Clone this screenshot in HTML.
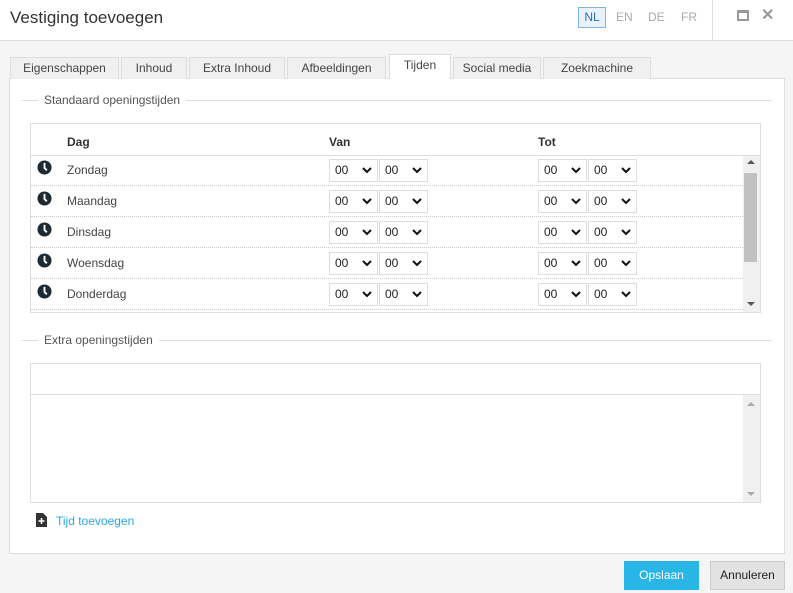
<!DOCTYPE html><html><head><style>
*{box-sizing:border-box;margin:0;padding:0}
body{width:793px;height:593px;background:#f5f5f5;font-family:"Liberation Sans",sans-serif;font-size:12px;color:#333;position:relative;overflow:hidden}
.a{position:absolute}
.hdr{left:0;top:0;width:793px;height:41px;background:#fff;border-bottom:1px solid #ddd}
.tab{position:absolute;top:57px;height:22px;border:1px solid #ddd;border-bottom:none;background:#f0f0f0;text-align:center;line-height:21px;font-size:12px;color:#444}
.panel{left:9px;top:78px;width:776px;height:476px;background:#fff;border:1px solid #ddd}
.leg{font-size:12px;color:#555;background:#fff;padding:0 6px}
.line{height:1px;background:#ddd}
.sel{position:absolute;width:49px;height:23px;border:1px solid #ddd;background:#fff;font-size:12px;line-height:21px;padding-left:5px;color:#222}
.sel svg{position:absolute;right:5px;top:7px}
.row{position:absolute;left:31px;width:712px;height:31px;border-bottom:1px dotted #ccc}
.clk{position:absolute;left:6px;top:5px}
.day{position:absolute;left:36px;top:8px;font-size:12px;color:#444}
</style></head><body>
<div class="a hdr"></div>
<div class="a" style="left:10px;top:8px;font-size:17px;color:#333">Vestiging toevoegen</div>
<div class="a" style="left:578px;top:7px;width:28px;height:21px;border:1px solid #7fb3e8;background:#e8f2fc;color:#2a6fc0;text-align:center;line-height:19px;font-size:12px">NL</div>
<div class="a" style="left:616px;top:10px;color:#aaa">EN</div>
<div class="a" style="left:648px;top:10px;color:#aaa">DE</div>
<div class="a" style="left:681px;top:10px;color:#aaa">FR</div>
<div class="a" style="left:712px;top:0;width:1px;height:40px;background:#ddd"></div>
<div class="a" style="left:737px;top:10px;width:12px;height:11px;border:2px solid #999;border-top-width:3px"></div>
<div class="a" style="left:761px;top:5px;font-size:16px;color:#999;font-weight:bold">✕</div>

<div class="a panel"></div>
<div class="tab" style="left:10px;width:109px">Eigenschappen</div>
<div class="tab" style="left:121px;width:66px">Inhoud</div>
<div class="tab" style="left:189px;width:96px">Extra Inhoud</div>
<div class="tab" style="left:287px;width:99px">Afbeeldingen</div>
<div class="tab" style="left:389px;top:54px;height:25px;width:62px;background:#fff;z-index:2">Tijden</div>
<div class="tab" style="left:453px;width:88px">Social media</div>
<div class="tab" style="left:543px;width:108px">Zoekmachine</div>

<div class="a line" style="left:22px;top:100px;width:750px"></div>
<div class="a leg" style="left:38px;top:93px">Standaard openingstijden</div>

<div class="a" style="left:30px;top:123px;width:731px;height:190px;border:1px solid #ddd;background:#fff;overflow:hidden">
<div class="a" style="left:0;top:0;width:731px;height:32px;border-bottom:1px solid #ddd"></div>
<div class="a" style="left:36px;top:11px;font-weight:bold;color:#333">Dag</div>
<div class="a" style="left:298px;top:11px;font-weight:bold;color:#333">Van</div>
<div class="a" style="left:507px;top:11px;font-weight:bold;color:#333">Tot</div>
<div class="a" style="left:712px;top:32px;width:17px;height:156px;background:#f0f0f0"></div>
<div class="a" style="left:713px;top:49px;width:13px;height:89px;background:#c1c1c1"></div>
<div class="a" style="left:716px;top:36px;width:0;height:0;border:4px solid transparent;border-bottom-color:#555;border-top:none"></div>
<div class="a" style="left:716px;top:178px;width:0;height:0;border:4px solid transparent;border-top-color:#555;border-bottom:none"></div>
</div>
<div id="rows"></div>

<div class="a line" style="left:22px;top:340px;width:750px"></div>
<div class="a leg" style="left:38px;top:333px">Extra openingstijden</div>
<div class="a" style="left:30px;top:363px;width:731px;height:140px;border:1px solid #ddd;background:#fff">
<div class="a" style="left:0;top:0;width:729px;height:31px;border-bottom:1px solid #ddd"></div>
<div class="a" style="left:712px;top:31px;width:17px;height:107px;background:#f0f0f0"></div>
<div class="a" style="left:716px;top:38px;border:4px solid transparent;border-bottom-color:#aaa;border-top:none"></div>
<div class="a" style="left:716px;top:128px;border:4px solid transparent;border-top-color:#aaa;border-bottom:none"></div>
</div>
<svg class="a" style="left:36px;top:513px" width="11" height="14" viewBox="0 0 11 14"><path d="M0 0h7l4 4v10H0z" fill="#333"/><path d="M5.5 5v6M2.5 8h6" stroke="#fff" stroke-width="1.6"/></svg>
<div class="a" style="left:56px;top:514px;color:#29a8e0">Tijd toevoegen</div>

<div class="a" style="left:624px;top:561px;width:75px;height:29px;background:#29b6e6;color:#fff;text-align:center;line-height:29px">Opslaan</div>
<div class="a" style="left:710px;top:561px;width:75px;height:29px;background:#e2e2e2;border:1px solid #ccc;color:#222;text-align:center;line-height:27px">Annuleren</div>

<script>
var d=["Zondag","Maandag","Dinsdag","Woensdag","Donderdag"],h="";
var chev='<svg width="10" height="7" viewBox="0 0 10 7"><path d="M1 1l4 4 4-4" stroke="#111" stroke-width="2" fill="none"/></svg>';
d.forEach(function(n,i){var t=155+i*31;
h+='<div class="row" style="top:'+t+'px"><svg class="clk" width="15" height="15" viewBox="0 0 16 16"><circle cx="8" cy="8" r="7.5" fill="#1e2a33"/><path d="M8 3v5.5l2.5 2.5" stroke="#fff" stroke-width="2" fill="none"/></svg><div class="day">'+n+'</div></div>';
[329,379,538,588].forEach(function(x){h+='<div class="sel" style="left:'+x+'px;top:'+(t+4)+'px">00'+chev+'</div>'});});
document.getElementById("rows").innerHTML=h;
</script>
</body></html>
